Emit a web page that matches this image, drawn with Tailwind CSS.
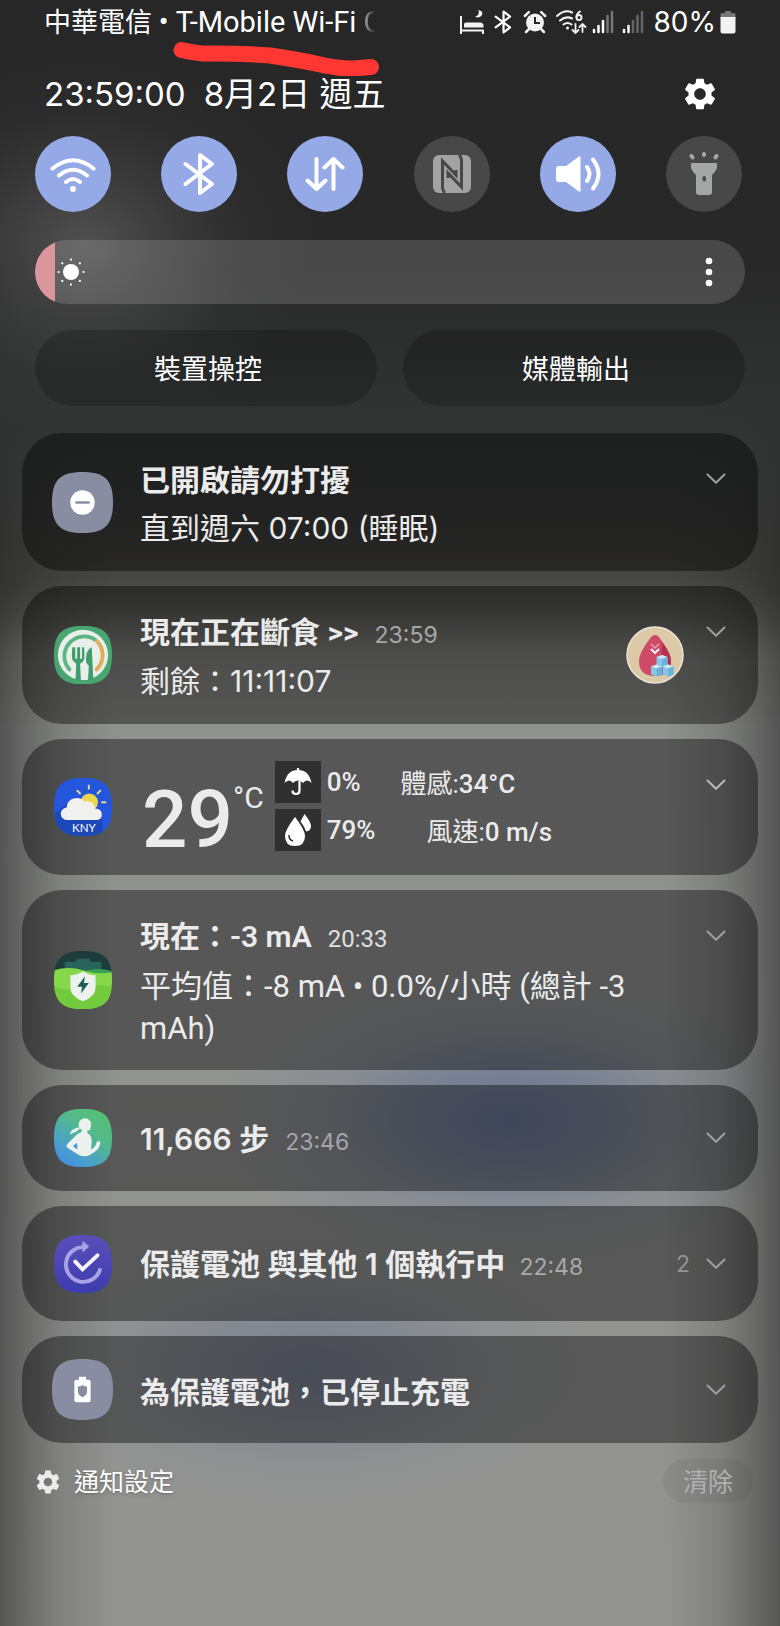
<!DOCTYPE html>
<html lang="zh-Hant">
    <head>
        <meta charset="UTF-8">
        <meta name="viewport" content="width=device-width, initial-scale=1.0">
        <title>通知面板</title>
        <script src="https://cdn.jsdelivr.net/npm/@tailwindcss/browser@4"></script>
    </head>
    <body class="bg-[#262726]">

        <!-- 共用圖示 -->
        <svg class="absolute size-0">
            <symbol id="gear" viewBox="2 2 20 20">
                <path d="M19.14 12.94c.04-.3.06-.61.06-.94 0-.32-.02-.64-.07-.94l2.03-1.58c.18-.14.23-.41.12-.61l-1.92-3.32c-.12-.22-.37-.29-.59-.22l-2.39.96c-.5-.38-1.03-.7-1.62-.94l-.36-2.54c-.04-.24-.24-.41-.48-.41h-3.84c-.24 0-.43.17-.47.41l-.36 2.54c-.59.24-1.13.57-1.62.94l-2.39-.96c-.22-.08-.47 0-.59.22L2.74 8.87c-.12.21-.08.47.12.61l2.03 1.58c-.05.3-.09.63-.09.94s.02.64.07.94l-2.03 1.58c-.18.14-.23.41-.12.61l1.92 3.32c.12.22.37.29.59.22l2.39-.96c.5.38 1.03.7 1.62.94l.36 2.54c.05.24.24.41.48.41h3.84c.24 0 .44-.17.47-.41l.36-2.54c.59-.24 1.13-.56 1.62-.94l2.39.96c.22.08.47 0 .59-.22l1.92-3.32c.12-.22.07-.47-.12-.61l-2.01-1.58zM12 15.6c-1.98 0-3.6-1.62-3.6-3.6s1.62-3.6 3.6-3.6 3.6 1.62 3.6 3.6-1.62 3.6-3.6 3.6z" fill="currentColor"/>
            </symbol>
            <symbol id="chevron" viewBox="0 0 20 12">
                <path d="M1.5 1.5L10 9.8 18.5 1.5" fill="none" stroke="currentColor" stroke-width="2" stroke-linecap="round" stroke-linejoin="round"/>
            </symbol>
            <symbol id="bt" viewBox="0 0 32 44">
                <path d="M2.500 12L29 32 17 41V3l12 9L2.500 32" fill="none" stroke="currentColor" stroke-width="4" stroke-linecap="round" stroke-linejoin="round"/>
            </symbol>
            <clipPath id="squircle"><path d="M30 0C52 0 60 8 60 30S52 60 30 60 0 52 0 30 8 0 30 0Z"/></clipPath>
        </svg>

        <!-- 背景 -->
        <div class="relative min-h-screen overflow-hidden font-['Inter','Noto_Sans_CJK_TC',sans-serif] text-white bg-[radial-gradient(230px_190px_at_85px_245px,rgb(120_120_120/0.5),rgb(110_110_110/0.25)_40%,rgb(100_100_100/0.08)_70%,transparent),linear-gradient(to_bottom,#262726_0px,#282828_270px,#313333_400px,rgb(52_54_54/0.85)_470px,rgb(60_60_58/0.5)_560px,transparent_640px),linear-gradient(to_right,rgb(0_0_0/0.42)_0px,rgb(0_0_0/0.3)_22px,rgb(0_0_0/0.12)_60px,transparent_115px,transparent_calc(100%-115px),rgb(0_0_0/0.12)_calc(100%-60px),rgb(0_0_0/0.3)_calc(100%-22px),rgb(0_0_0/0.42)_100%),radial-gradient(290px_150px_at_510px_1120px,rgb(96_110_150/0.8),rgb(100_114_150/0.6)_30%,rgb(118_126_150/0.25)_65%,rgb(140_142_150/0))),radial-gradient(290px_140px_at_310px_1370px,rgb(106_114_146/0.6),rgb(110_120_146/0.4)_35%,rgb(126_132_148/0.15)_70%,rgb(140_142_150/0)),linear-gradient(to_bottom,#3a3a3a_470px,#464542_560px,#52524e_590px,#82827e_660px,#8f918f_730px,#939492_100%)]">

            <!-- 狀態列 -->
            <header class="flex h-11 items-center justify-between pl-11 pr-11 font-['Roboto','Noto_Sans_CJK_TC',sans-serif]">
                <p class="whitespace-nowrap text-[27px] leading-8">中華電信 <span class="text-[29px]">• T-Mobile Wi-Fi <span class="bg-linear-to-r from-white/60 to-transparent to-60% bg-clip-text text-transparent">C</span></span></p>
                <div class="flex items-center">
                    <svg class="h-6 w-6" viewBox="0 0 24 24" fill="#f2f2f2">
                        <path d="M1 6v18M1 20.500h22.500M23 20v4" stroke="#f2f2f2" stroke-width="2" fill="none"/>
                        <path d="M4 17.500v-3q0-2 2-2h14q3.500 0 3.500 3.500v1.500z"/>
                        <path d="M18.500 0q5 1 3.500 5-2.500 4-7 1.500 5-1 3.500-6.500z"/>
                    </svg>
                    <svg class="ml-[10px] h-6 w-[18px]"><use href="#bt"/></svg>
                    <svg class="ml-[11px] h-6 w-6" viewBox="0 0 24 24">
                        <circle cx="12" cy="12.500" r="9" fill="#f2f2f2"/>
                        <path d="M1.800 6l4-3.800M22.200 6l-4-3.800M6 19l-3 3M18 19l3 3" stroke="#f2f2f2" stroke-width="2.500" stroke-linecap="round"/>
                        <path d="M12 7v6h5" stroke="#262726" stroke-width="2" fill="none"/>
                    </svg>
                    <svg class="ml-2 h-6 w-8" viewBox="0 0 32 24" fill="none" stroke="#f2f2f2" stroke-width="2" stroke-linecap="round">
                        <path d="M2 6q8-7 15-3.500M5 10.500q6-5 12-2M8.500 14.500q4-3 8 0"/>
                        <circle cx="12.500" cy="18" r="1.500" fill="#f2f2f2" stroke="none"/>
                        <path d="M25 1.500q-3.500 2-3.500 5.500" />
                        <circle cx="24" cy="7.500" r="2.500"/>
                        <path d="M20.500 14v9M17.500 20l3 3 3-3M27.500 22v-8M24.500 17l3-3 3 3" stroke-width="1.800"/>
                    </svg>
                    <svg class="ml-[5px] h-6 w-[22px]" viewBox="0 0 22 24" stroke-width="2.500" stroke-linecap="round">
                        <path d="M2 20v2M6.500 16v6M11 11v11" stroke="#fff"/>
                        <path d="M15.500 6v16M20 2v20" stroke="#777"/>
                    </svg>
                    <svg class="ml-2 h-6 w-[22px]" viewBox="0 0 22 24" stroke-width="2.500" stroke-linecap="round">
                        <path d="M2 20v2M6.500 16v6" stroke="#fff"/>
                        <path d="M11 11v11M15.500 6v16M20 2v20" stroke="#666"/>
                    </svg>
                    <span class="ml-[10px] font-['Inter'] text-[28px] leading-8">80%</span>
                    <svg class="ml-1 h-6 w-4" viewBox="0 0 16 24">
                        <path d="M5 1h6v2h3q1.500 0 1.500 1.500V8H.5V4.500Q.5 3 2 3h3z" fill="#777"/>
                        <path d="M.5 7h15v14.500q0 2-2 2h-11q-2 0-2-2z" fill="#f2f2f2"/>
                    </svg>
                </div>
            </header>

            <!-- 紅色畫線 -->
            <svg class="absolute left-[172px] top-10 h-9 w-52" viewBox="0 0 208 36" fill="none">
                <path d="M9.500 10Q24 13 31 13.500 65 13 98 15.500 128 20 146 24 168 29 182 28.500L199 27" stroke="#fe3733" stroke-width="16" stroke-linecap="round" stroke-linejoin="round"/>
            </svg>

            <!-- 時間與設定 -->
            <div class="flex h-[92px] items-center justify-between pl-11 pr-16 pt-2">
                <p class="flex gap-[18px] text-[33px] leading-10"><time>23:59:00</time><span>8月2日 週五</span></p>
                <button aria-label="設定"><svg class="h-8 w-8"><use href="#gear"/></svg></button>
            </div>

            <!-- 快速設定 -->
            <div class="flex justify-between pl-[35px] pr-[38px]">
                <button aria-label="Wi-Fi" class="flex size-[76px] items-center justify-center rounded-full bg-[#95a9e6]">
                    <svg class="h-9 w-12" viewBox="0 0 48 36" fill="none" stroke="#fff" stroke-width="4" stroke-linecap="round">
                        <path d="M3.500 12.500Q24-4 44.500 12.500M10 19.500Q24 8 38 19.500M17 26Q24 20 31 26"/>
                        <circle cx="24" cy="33" r="3" fill="#fff" stroke="none"/>
                    </svg>
                </button>
                <button aria-label="藍牙" class="flex size-[76px] items-center justify-center rounded-full bg-[#95a9e6]">
                    <svg class="h-11 w-8"><use href="#bt"/></svg>
                </button>
                <button aria-label="行動數據" class="flex size-[76px] items-center justify-center rounded-full bg-[#95a9e6]">
                    <svg class="h-9 w-10" viewBox="0 0 40 36" fill="none" stroke="#fff" stroke-width="4" stroke-linecap="round" stroke-linejoin="round">
                        <path d="M11.500 3v30M2.500 24.500l9 8.500 9-8.500M28.500 33V3M19.500 11.500l9-8.500 9 8.500"/>
                    </svg>
                </button>
                <button aria-label="NFC" class="flex size-[76px] items-center justify-center rounded-full bg-white/15">
                    <svg class="size-[38px]" viewBox="0 0 38 38">
                        <rect x="0" y="0" width="38" height="38" rx="6" fill="#a3a3a3"/>
                        <path d="M12 38Q9.500 36 9.500 32V6L23 20V15" stroke="#474747" stroke-width="3" fill="none"/>
                        <path d="M26 0Q28.500 2 28.500 6v26L15 18V23" stroke="#474747" stroke-width="3" fill="none"/>
                    </svg>
                </button>
                <button aria-label="音效" class="flex size-[76px] items-center justify-center rounded-full bg-[#95a9e6]">
                    <svg class="h-9 w-[46px]" viewBox="0 0 46 36" fill="#fff">
                        <path d="M4 10h7L24 0.500q1.500-1 1.500 1v33q0 2-1.500 1L11 26H4q-3 0-3-3V13q0-3 3-3z"/>
                        <path d="M32 11q5 7 0 14M38 3.500q11 14.500 0 29" fill="none" stroke="#fff" stroke-width="4" stroke-linecap="round"/>
                    </svg>
                </button>
                <button aria-label="手電筒" class="flex size-[76px] items-center justify-center rounded-full bg-white/15">
                    <svg class="h-11 w-8" viewBox="0 0 32 44" fill="#a5a7a6">
                        <path d="M3 11h26v4q0 3-5 8v17q0 3-3 3H11q-3 0-3-3V23Q3 18 3 15z"/>
                        <rect x="14.500" y="24" width="3.500" height="5.500" rx="1.700" fill="#484b49"/>
                        <path d="M3.500 4l1 1.500M16 2v1M28.500 4l-1 1.500" stroke="#a5a7a6" stroke-width="4" stroke-linecap="round"/>
                    </svg>
                </button>
            </div>

            <!-- 亮度 -->
            <div class="relative mx-[35px] mt-7 h-16">
                <input type="range" value="3" aria-label="亮度" class="block h-16 w-full appearance-none rounded-[32px] bg-[linear-gradient(to_right,#d9979c_20px,rgb(255_255_255/0.15)_20px)] [&::-webkit-slider-thumb]:appearance-none">
                <svg class="pointer-events-none absolute left-[22px] top-[18px] size-7" viewBox="0 0 28 28" fill="#fff">
                    <circle cx="14" cy="14" r="8"/>
                    <path d="M14 1.500v.1M14 26.500v.1M1.500 14h.1M26.500 14h.1M5.200 5.200l.1.1M22.800 5.200l.1.1M5.200 22.800l.1.1M22.800 22.800l.1.1" stroke="#fff" stroke-width="2.200" stroke-linecap="round"/>
                </svg>
                <button aria-label="更多" class="absolute right-7 top-4 h-8 w-4">
                    <svg class="h-8 w-4" viewBox="0 0 16 32" fill="#fff"><circle cx="8" cy="5" r="3.300"/><circle cx="8" cy="16" r="3.300"/><circle cx="8" cy="27" r="3.300"/></svg>
                </button>
            </div>

            <div class="mx-[35px] mt-[26px] grid grid-cols-2 gap-[26px] text-[27px]">
                <button class="h-[76px] rounded-[38px] bg-black/20 pl-1 pt-1">裝置操控</button>
                <button class="h-[76px] rounded-[38px] bg-black/20 pl-1 pt-1">媒體輸出</button>
            </div>

            <!-- 通知列表 -->
            <main class="mx-[22px] mt-[27px] flex flex-col gap-[15px] text-[30px] leading-[42px] text-[#ebebeb]">

                <article class="flex min-h-[138px] rounded-[40px] bg-black/40 pl-[30px] pr-8">
                    <svg class="size-[61px] shrink-0 self-center" viewBox="0 0 60 60">
                        <g clip-path="url(#squircle)"><rect width="60" height="60" fill="#898da2"/></g>
                        <circle cx="30" cy="30" r="12" fill="#fff"/>
                        <path d="M24 30h12" stroke="#898da2" stroke-width="2.500" stroke-linecap="round"/>
                    </svg>
                    <div class="ml-[27px] flex grow flex-col gap-[6px] pt-[26px]">
                        <h2 class="font-semibold">已開啟請勿打擾</h2>
                        <p>直到週六 07:00 (睡眠)</p>
                    </div>
                    <button aria-label="展開" class="mt-10 self-start text-[#a0a0a0]"><svg class="h-3 w-5"><use href="#chevron"/></svg></button>
                </article>

                <article class="flex min-h-[138px] rounded-[40px] bg-black/40 pl-8 pr-8">
                    <svg class="size-[58px] shrink-0 self-center" viewBox="0 0 60 60">
                        <g clip-path="url(#squircle)">
                            <rect width="60" height="60" fill="#49a671"/>
                            <circle cx="30" cy="30" r="26" fill="#e8efe9"/>
                            <path d="M16 45A20.500 20.500 0 0 1 43 14.500" fill="none" stroke="#5cb584" stroke-width="4" stroke-linecap="round"/>
                            <path d="M44 15.500A20.500 20.500 0 0 1 44 45" fill="none" stroke="#dfae5c" stroke-width="4" stroke-linecap="round"/>
                            <path d="M19 22q-1 9 0 13 2 3 4 4l-1 21h6l-1-21q3-1 4-4 1-4 0-13h-2v12h-2V22h-3v12h-2V22z" fill="#3f9c6c"/>
                            <path d="M39 22q-6 3-6 13 0 4 3 6l-1 19h6z" fill="#3f9c6c"/>
                            <path d="M0 56h60v4H0z" fill="#49a671"/>
                        </g>
                    </svg>
                    <div class="ml-7 flex grow flex-col gap-1 pt-[26px]">
                        <div class="flex items-baseline gap-4 font-['Roboto','Noto_Sans_CJK_TC',sans-serif]"><h2 class="font-semibold">現在正在斷食 &gt;&gt;</h2><time class="font-['Inter'] text-[23px] text-[#a8a8a5]">23:59</time></div>
                        <p>剩餘：11:11:07</p>
                    </div>
                    <svg class="mr-[22px] size-[58px] shrink-0 self-center" viewBox="0 0 58 58">
                        <circle cx="29" cy="29" r="28" fill="#dcc9a8" stroke="#ece4d6" stroke-width="1.500"/>
                        <path d="M29 9q3 0 6 5 10 13 10 21 0 15-16 15T13 35q0-8 10-21 3-5 6-5z" fill="#cd4b67"/>
                        <path d="M36 16q9 12 9 19 0 12-10 14z" fill="#b6304f"/>
                        <path d="M25 18l4 4 4-4" fill="none" stroke="#e7a3b0" stroke-width="1.500"/>
                        <path d="M25 23l4 4 4-4" fill="none" stroke="#fff" stroke-width="1.800"/>
                        <g>
                            <path d="M30.500 31l5.500-2 5.500 2v8l-5.500 2-5.500-2z" fill="#86c5e6"/><path d="M30.500 31l5.500-2 5.500 2-5.500 2z" fill="#cfe9f5"/><path d="M36 33v8l5.500-2v-8z" fill="#69b2dc"/>
                            <path d="M25 40.500l5.500-2 5.500 2v8l-5.500 2-5.500-2z" fill="#86c5e6"/><path d="M25 40.500l5.500-2 5.500 2-5.500 2z" fill="#cfe9f5"/><path d="M30.500 42.500v8l5.500-2v-8z" fill="#69b2dc"/>
                            <path d="M36.500 40.500l5.500-2 5.500 2v8l-5.500 2-5.500-2z" fill="#86c5e6"/><path d="M36.500 40.500l5.500-2 5.500 2-5.500 2z" fill="#cfe9f5"/><path d="M42 42.500v8l5.500-2v-8z" fill="#69b2dc"/>
                        </g>
                    </svg>
                    <button aria-label="展開" class="mt-10 self-start text-[#a0a0a0]"><svg class="h-3 w-5"><use href="#chevron"/></svg></button>
                </article>

                <!-- 天氣 -->
                <article class="flex min-h-[136px] rounded-[40px] bg-black/40 pl-8 pr-8 font-['Roboto','Noto_Sans_CJK_TC',sans-serif]">
                    <svg class="size-[58px] shrink-0 self-center" viewBox="0 0 60 60">
                        <g clip-path="url(#squircle)">
                            <rect width="60" height="60" fill="#2356dc"/>
                            <path d="M0 38L14 26 50 43v17H0z" fill="#1c48b8"/>
                        </g>
                        <path d="M36 7v5M23.500 12.500l4 4M48.500 12.500l-4 4M49 25h5" stroke="#e8dc8c" stroke-width="2"/>
                        <circle cx="36.500" cy="25" r="9" fill="#ecd74b"/>
                        <path d="M14 43.500a6.500 6.500 0 0 1-1-13 10.500 10.500 0 0 1 18.500-6 8 8 0 0 1 11 7q7 .5 7 6 0 6-6 6z" fill="#f0f0ee"/>
                        <text x="31" y="56" text-anchor="middle" font-family="Lato" font-size="12" fill="#fff">KNY</text>
                    </svg>
                    <p class="ml-[30px] mt-[41px] flex items-start font-medium leading-none"><span class="text-[80px] leading-[80px]">29</span><span class="pt-1 text-[30px] font-normal leading-7">°C</span></p>
                    <div class="ml-[11px] mt-[22px] grid grid-cols-[46px_auto] content-start items-center gap-x-[6px] gap-y-[6px] text-[26px] font-medium leading-8">
                        <span class="flex h-[42px] items-center justify-center bg-[#303030]">
                            <svg class="size-7" viewBox="0 0 28 28" fill="#fff"><path d="M14 2q11 0 13.500 13Q25 12 23 12.500q-2 0-4 2.500-2-2.500-5-2.500T9 15q-2-2.500-4-2.500T.5 15Q3 2 14 2z"/><path d="M14 0v3M15.500 13v9.500q0 3.500-3.500 3.500T8.500 22.500" fill="none" stroke="#fff" stroke-width="2.200"/></svg>
                        </span>
                        <span>0%</span>
                        <span class="flex h-[42px] items-center justify-center bg-[#303030]">
                            <svg class="size-8" viewBox="0 0 32 32" fill="#fff"><path d="M13 3q10 13 10 19 0 10-10 10T3 22Q3 16 13 3z"/><path d="M22.500 0q6.500 8 6.500 12 0 5-5 5.500-1-4-5.500-10z"/><path d="M7 21q-.5 4.500 4 6" fill="none" stroke="#303030" stroke-width="1.500"/></svg>
                        </span>
                        <span>79%</span>
                    </div>
                    <div class="ml-[25px] mt-[22px] flex grow flex-col gap-4 pt-[7px] text-[26px] leading-8">
                        <p>體感:<b class="font-medium">34°C</b></p>
                        <p class="pl-[26px]">風速:<b class="font-medium">0 m/s</b></p>
                    </div>
                    <button aria-label="展開" class="mt-10 self-start text-[#b8b8b8]"><svg class="h-3 w-5"><use href="#chevron"/></svg></button>
                </article>

                <article class="flex min-h-[180px] rounded-[40px] bg-black/40 pl-8 pr-8 font-['Roboto','Noto_Sans_CJK_TC',sans-serif]">
                    <svg class="size-[58px] shrink-0 self-center" viewBox="0 0 60 60">
                        <g clip-path="url(#squircle)">
                            <rect width="60" height="60" fill="#1d3c3c"/>
                            <path d="M11 24V13q0-2 2-2h10V8h14v3h10q2 0 2 2v11z" fill="#28665c"/>
                            <path d="M26 24q16-9 34-3v12H26z" fill="#3aa052"/>
                            <path d="M0 20q15-5 30 0t30 2v38H0z" fill="#86d84a"/>
                            <path d="M0 37q14 6 28 1t32-1v23H0z" fill="#72cb3c"/>
                        </g>
                        <path d="M30 21q6 4 13 4v13q0 9-13 14-13-5-13-14V25q7 0 13-4z" fill="#eef2ee"/>
                        <path d="M32 26l-8 11h5l-1 7 8-11h-5z" fill="#1f5f58"/>
                    </svg>
                    <div class="ml-7 flex grow flex-col gap-[6px] pt-[26px]">
                        <div class="flex items-baseline gap-4"><h2 class="font-semibold">現在：-3 mA</h2><time class="text-[24px] text-[#e0e0e0]">20:33</time></div>
                        <p class="max-w-[520px] text-[31px]">平均值：-8 mA • 0.0%/小時 (總計 -3 mAh)</p>
                    </div>
                    <button aria-label="展開" class="mt-10 self-start text-[#a0a0a0]"><svg class="h-3 w-5"><use href="#chevron"/></svg></button>
                </article>

                <article class="flex min-h-[106px] items-center rounded-[40px] bg-black/40 pl-8 pr-8">
                    <svg class="size-[58px] shrink-0" viewBox="0 0 60 60">
                        <defs><linearGradient id="health" x1="0" y1="1" x2="0.700" y2="0"><stop offset="0" stop-color="#3f87e8"/><stop offset="0.300" stop-color="#4a9ed0"/><stop offset="0.700" stop-color="#52b98a"/><stop offset="1" stop-color="#56bf78"/></linearGradient></defs>
                        <g clip-path="url(#squircle)"><rect width="60" height="60" fill="url(#health)"/></g>
                        <circle cx="32" cy="16" r="6.500" fill="#ecf1ee"/>
                        <path d="M28.500 17h9v5h-3v3q5 2 4.500 9l-1 13q-7 4-13 0l-11-7q-2-2 0-4l10-10q5-2 5-4z" fill="#ecf1ee"/>
                        <path d="M28 19q-9 0-12 7 7-1 11-6z" fill="#ecf1ee"/>
                        <path d="M23.500 35l-4 3.500 4.500 3.500q1-3-.5-7z" fill="#4a9dd2"/>
                        <path d="M36 45.500Q45 42 46 35" fill="none" stroke="#ecf1ee" stroke-width="4" stroke-linecap="round"/>
                    </svg>
                    <div class="ml-7 flex grow items-baseline gap-4 pt-1"><h2 class="font-semibold">11,666 步</h2><time class="text-[23px] text-[#a4a6ac]">23:46</time></div>
                    <button aria-label="展開" class="text-[#a0a0a0]"><svg class="h-3 w-5"><use href="#chevron"/></svg></button>
                </article>

                <article class="flex min-h-[115px] items-center rounded-[40px] bg-black/40 pl-8 pr-8">
                    <svg class="size-[58px] shrink-0" viewBox="0 0 60 60">
                        <defs><linearGradient id="routine" x1="0" y1="0" x2="0" y2="1"><stop offset="0" stop-color="#5a4fba"/><stop offset="1" stop-color="#3d3cae"/></linearGradient></defs>
                        <g clip-path="url(#squircle)"><rect width="60" height="60" fill="url(#routine)"/></g>
                        <path d="M30 12.500A18 18 0 1 0 47.500 36" fill="none" stroke="#a9a3e6" stroke-width="4" stroke-linecap="round"/>
                        <path d="M29.500 6l7 6-7 6z" fill="#a9a3e6"/>
                        <path d="M22 27.500l7.500 8L45 21" fill="none" stroke="#f5f5fa" stroke-width="4" stroke-linecap="round"/>
                    </svg>
                    <div class="ml-7 flex grow items-baseline gap-[14px] pt-1"><h2 class="font-semibold">保護電池 與其他 1 個執行中</h2><time class="text-[23px] text-[#a9a9a9]">22:48</time></div>
                    <span class="mr-4 text-[23px] text-[#939393]">2</span>
                    <button aria-label="展開" class="text-[#a0a0a0]"><svg class="h-3 w-5"><use href="#chevron"/></svg></button>
                </article>

                <article class="flex min-h-[107px] items-center rounded-[40px] bg-black/40 pl-[30px] pr-8">
                    <svg class="size-[61px] shrink-0" viewBox="0 0 60 60">
                        <g clip-path="url(#squircle)"><rect width="60" height="60" fill="#898da2"/></g>
                        <path d="M26.500 17.500h7v3h2.500q2 0 2 2V40q0 2.500-2 2.500H24q-2 0-2-2.500V22.500q0-2 2-2h2.500z" fill="#fff"/>
                        <path d="M30 25.500q2 1.500 4.500 1.500v5q0 3.500-4.500 5.500-4.500-2-4.500-5.500v-5q2.500 0 4.500-1.500z" fill="#898da2"/>
                    </svg>
                    <h2 class="ml-[27px] grow pt-1 font-semibold">為保護電池，已停止充電</h2>
                    <button aria-label="展開" class="text-[#a0a0a0]"><svg class="h-3 w-5"><use href="#chevron"/></svg></button>
                </article>
            </main>

            <!-- 底部 -->
            <footer class="mt-4 flex items-center justify-between pl-9 pr-[27px] text-[25px] leading-8">
                <button class="flex items-center gap-[14px] pt-[2px] text-shadow-md"><svg class="size-6 text-[#ececec]"><use href="#gear"/></svg>通知設定</button>
                <button class="h-11 rounded-[22px] bg-black/5 px-5 pt-[2px] text-[#b0b0b0]">清除</button>
            </footer>
        </div>
    </body>
</html>
